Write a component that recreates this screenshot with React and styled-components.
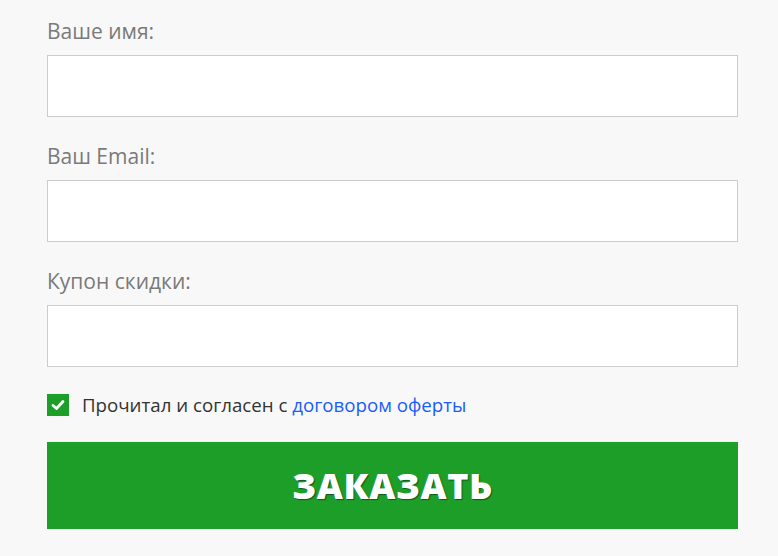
import React from "react";
import styled, { createGlobalStyle } from "styled-components";

const Global = createGlobalStyle`
  html, body { margin: 0; padding: 0; background: #f8f8f8; }
  body { font-family: "Open Sans", "Liberation Sans", sans-serif; }
  * { box-sizing: border-box; }
`;

const Form = styled.form`
  display: flex;
  flex-direction: column;
  padding: 16px 40px 0 47px;
  width: 778px;
`;

const Field = styled.div`
  display: flex;
  flex-direction: column;
  gap: 9px;
  margin-bottom: 24px;
`;

const Label = styled.label`
  font-size: 21px;
  line-height: 30px;
  color: #7a7a7a;
`;

const Input = styled.input`
  height: 62px;
  width: 100%;
  border: 1px solid #cccccc;
  background: #ffffff;
  font-family: inherit;
  font-size: 18px;
  padding: 0 14px;
  outline: none;
`;

const Agree = styled.div`
  display: flex;
  align-items: center;
  gap: 13px;
  margin-top: 1px;
  font-size: 18.7px;
  line-height: 26px;
  color: #333333;
`;

const Box = styled.span`
  width: 22px;
  height: 22px;
  background: #1c9e29;
  display: flex;
  align-items: center;
  justify-content: center;
  flex: none;
`;

const Link = styled.a`
  color: #1a5cff;
  text-decoration: none;
`;

const Button = styled.button`
  margin-top: 24px;
  height: 87px;
  width: 100%;
  border: none;
  background: #1c9e29;
  color: #ffffff;
  font-family: "Open Sans", "Liberation Sans", sans-serif;
  font-weight: 800;
  font-size: 36px;
  letter-spacing: 0.6px;
  text-shadow: 1px 1px 1px rgba(0, 0, 0, 0.45);
  cursor: pointer;
`;

export default function App() {
  return (
    <>
      <Global />
      <Form onSubmit={(e) => e.preventDefault()}>
        <Field>
          <Label>Ваше имя:</Label>
          <Input type="text" />
        </Field>
        <Field>
          <Label>Ваш Email:</Label>
          <Input type="email" />
        </Field>
        <Field>
          <Label>Купон скидки:</Label>
          <Input type="text" />
        </Field>
        <Agree>
          <Box>
            <svg width="14" height="12" viewBox="0 0 14 12">
              <path d="M2 6.5 L5.5 9.5 L12 2.5" fill="none" stroke="#fff" strokeWidth="2.8" strokeLinecap="round" strokeLinejoin="round" />
            </svg>
          </Box>
          <span>
            Прочитал и согласен с <Link href="#">договором оферты</Link>
          </span>
        </Agree>
        <Button type="submit">ЗАКАЗАТЬ</Button>
      </Form>
    </>
  );
}
